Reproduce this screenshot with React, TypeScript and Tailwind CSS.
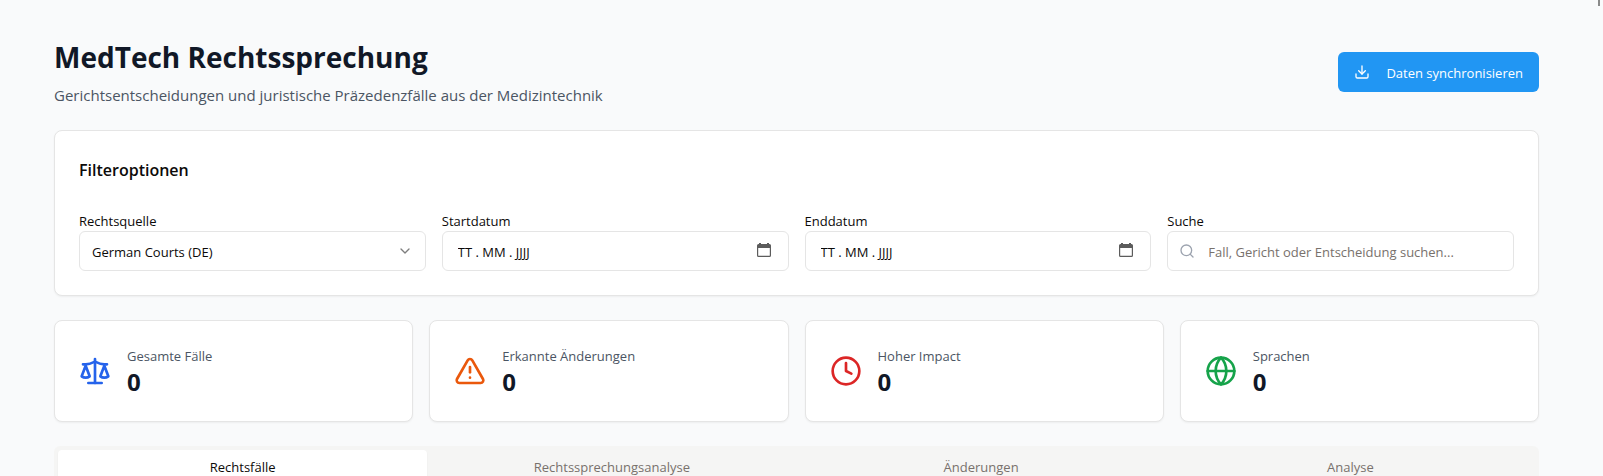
import React from "react";
import { ChevronDown, Clock, Download, Globe, Search, TriangleAlert } from "lucide-react";

const fieldClass =
  "h-10 w-full rounded-md border border-[#e5e5e5] bg-white text-[13px] text-stone-950 placeholder:opacity-100 focus:outline-2 focus:outline-blue-500";

function ScaleIcon() {
  return (
    <svg
      className="size-8 shrink-0 text-[#2563eb]"
      viewBox="0 0 24 24"
      fill="none"
      stroke="currentColor"
      strokeWidth="2"
      strokeLinecap="round"
      strokeLinejoin="round"
      aria-hidden="true"
    >
      <path d="m16 16 3-8 3 8c-.87.65-1.92 1-3 1s-2.13-.35-3-1Z" />
      <path d="m2 16 3-8 3 8c-.87.65-1.92 1-3 1s-2.13-.35-3-1Z" />
      <path d="M7 21h10" />
      <path d="M12 3v18" />
      <path d="M3 7h2c2 0 5-1 7-2 2 1 5 2 7 2h2" />
    </svg>
  );
}

function CalendarIcon() {
  return (
    <svg
      className="pointer-events-none absolute top-3 right-4 size-4 text-[#5c5c5c]"
      viewBox="0 0 16 16"
      aria-hidden="true"
    >
      <path
        fill="currentColor"
        fillRule="evenodd"
        d="M2 0h2v1h6V0h2v1h.5A1.500 1.500 0 0 1 14 2.500V12.500A1.500 1.500 0 0 1 12.500 14h-11A1.500 1.500 0 0 1 0 12.500v-10A1.500 1.500 0 0 1 1.500 1H2zM1.200 5v7.300a.5.5 0 0 0 .5.5h10.600a.5.5 0 0 0 .5-.5V5z"
      />
    </svg>
  );
}

function Field({ id, label, children }: { id: string; label: string; children: React.ReactNode }) {
  return (
    <div>
      <label htmlFor={id} className="block pt-1 text-[13px] leading-5 text-stone-950">
        {label}
      </label>
      <div className="relative">{children}</div>
    </div>
  );
}

function DateField({ id, label }: { id: string; label: string }) {
  return (
    <Field id={id} label={label}>
      <input
        id={id}
        type="text"
        inputMode="numeric"
        placeholder="TT . MM . JJJJ"
        className={`${fieldClass} pt-0.5 pr-10 pl-[15px] placeholder:text-stone-950`}
      />
      <CalendarIcon />
    </Field>
  );
}

const stats = [
  { label: "Gesamte Fälle", value: 0, icon: <ScaleIcon /> },
  { label: "Erkannte Änderungen", value: 0, icon: <TriangleAlert className="size-8 shrink-0 text-[#ea580c]" /> },
  { label: "Hoher Impact", value: 0, icon: <Clock className="size-8 shrink-0 text-[#dc2626]" /> },
  { label: "Sprachen", value: 0, icon: <Globe className="size-8 shrink-0 text-[#16a34a]" /> },
];

const tabs = ["Rechtsfälle", "Rechtssprechungsanalyse", "Änderungen", "Analyse"];

export default function App() {
  const [active, setActive] = React.useState(0);

  return (
    <div className="relative h-screen overflow-hidden bg-[#f9fafb] font-['Open_Sans','Noto_Sans',sans-serif]">
      <div className="absolute top-0 right-[3px] h-1.5 w-0.5 bg-[#8a8a8a]" />
      <main className="flex flex-col gap-6 pt-[38px] pr-16 pl-[54px]">
        <header className="flex items-center justify-between">
          <div>
            <h1 className="text-[28px] leading-[38px] font-bold text-[#111827]">MedTech Rechtssprechung</h1>
            <p className="mt-2 text-[15px] leading-[22px] text-[#4b5563]">
              Gerichtsentscheidungen und juristische Präzedenzfälle aus der Medizintechnik
            </p>
          </div>
          <button
            type="button"
            className="flex h-10 items-center gap-4 rounded-md bg-[#2196f3] px-4 text-[13px] text-white"
          >
            <Download className="size-4" />
            <span className="pt-[3px]">Daten synchronisieren</span>
          </button>
        </header>

        <section className="rounded-lg border border-[#e5e5e5] bg-white p-6 shadow-xs">
          <h2 className="text-base leading-[30px] font-semibold text-stone-950">Filteroptionen</h2>
          <div className="mt-[22px] grid grid-cols-4 gap-4">
            <Field id="source" label="Rechtsquelle">
              <select id="source" className={`${fieldClass} appearance-none px-3 pt-1`}>
                <option>German Courts (DE)</option>
              </select>
              <ChevronDown className="pointer-events-none absolute top-3 right-[13px] size-4 opacity-50" />
            </Field>
            <DateField id="start" label="Startdatum" />
            <DateField id="end" label="Enddatum" />
            <Field id="search" label="Suche">
              <Search className="pointer-events-none absolute top-3 left-3 size-4 text-[#9ca3af]" />
              <input
                id="search"
                type="text"
                placeholder="Fall, Gericht oder Entscheidung suchen..."
                className={`${fieldClass} pt-0.5 pr-3 pl-10 placeholder:text-[#78716c]`}
              />
            </Field>
          </div>
        </section>

        <section className="grid grid-cols-4 gap-4">
          {stats.map((s) => (
            <div key={s.label} className="flex items-center gap-4 rounded-lg border border-[#e5e5e5] bg-white p-6 shadow-xs">
              {s.icon}
              <div>
                <p className="text-[13px] leading-[22px] text-[#4b5563]">{s.label}</p>
                <p className="text-2xl leading-[30px] font-bold text-[#111827]">{s.value}</p>
              </div>
            </div>
          ))}
        </section>

        <div role="tablist" className="grid h-10 grid-cols-4 rounded-md bg-[#f5f5f4] p-1">
          {tabs.map((tab, i) => (
            <button
              key={tab}
              type="button"
              role="tab"
              aria-selected={i === active}
              onClick={() => setActive(i)}
              className={`rounded-sm pt-1 text-[13px] ${i === active ? "bg-white text-stone-950 shadow-xs" : "text-[#78716c]"}`}
            >
              {tab}
            </button>
          ))}
        </div>
      </main>
    </div>
  );
}
